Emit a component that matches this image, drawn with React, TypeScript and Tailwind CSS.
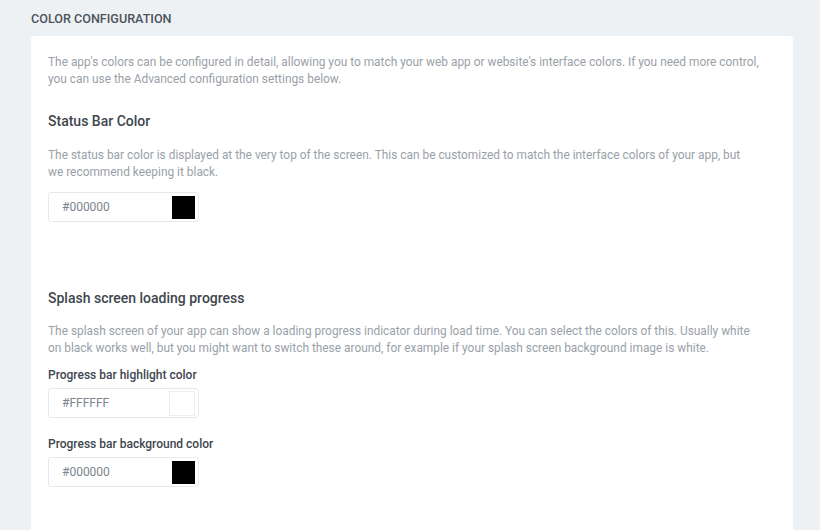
interface ColorFieldProps {
    value: string;
    swatch: 'black' | 'white';
}

function ColorField({ value, swatch }: ColorFieldProps) {
    return (
        <div className="flex h-[30px] w-[151px] items-center rounded-[3px] border border-[#e7eaed] bg-white pl-[13px] pr-[3px]">
            <span className="flex-1 text-[12px] text-[#7d848b]">{value}</span>
            {swatch === 'black' ? (
                <div className="h-[23px] w-[23px] bg-black" />
            ) : (
                <div className="h-[25px] w-[26px] border border-[#eceff1] bg-white" />
            )}
        </div>
    );
}

export default function App() {
    return (
        <div
            className="min-h-[530px] w-full bg-[#eef1f4] px-[31px] pt-[12px]"
            style={{ fontFamily: 'Roboto, "Liberation Sans", sans-serif' }}
        >
            <h2 className="text-[12.6px] font-medium uppercase leading-[14px] text-[#4b545c]">
                Color configuration
            </h2>

            <div className="mt-[10px] h-[500px] w-[762px] rounded-t-[3px] bg-white px-[17px] pt-[18px]">
                <p className="text-[11.9px] leading-[17px] text-[#9aa1a8]">
                    The app's colors can be configured in detail, allowing you to match your web app or website's
                    interface colors. If you need more control, you can use the Advanced configuration settings below.
                </p>

                <h3 className="mt-[23px] text-[14px] font-medium leading-[20px] text-[#3e464e]">Status Bar Color</h3>
                <p className="mt-[16px] max-w-[705px] text-[11.9px] leading-[17px] text-[#9aa1a8]">
                    The status bar color is displayed at the very top of the screen. This can be customized to match the
                    interface colors of your app, but we recommend keeping it black.
                </p>
                <div className="mt-[11px]">
                    <ColorField value="#000000" swatch="black" />
                </div>

                <h3 className="mt-[66px] text-[14px] font-medium leading-[20px] text-[#3e464e]">
                    Splash screen loading progress
                </h3>
                <p className="mt-[15px] max-w-[705px] text-[11.9px] leading-[17px] text-[#9aa1a8]">
                    The splash screen of your app can show a loading progress indicator during load time. You can select
                    the colors of this. Usually white on black works well, but you might want to switch these around, for
                    example if your splash screen background image is white.
                </p>

                <label className="mt-[10px] block text-[12px] font-medium leading-[16px] text-[#3e464e]">
                    Progress bar highlight color
                </label>
                <div className="mt-[5px]">
                    <ColorField value="#FFFFFF" swatch="white" />
                </div>

                <label className="mt-[18px] block text-[12px] font-medium leading-[16px] text-[#3e464e]">
                    Progress bar background color
                </label>
                <div className="mt-[5px]">
                    <ColorField value="#000000" swatch="black" />
                </div>
            </div>
        </div>
    );
}
